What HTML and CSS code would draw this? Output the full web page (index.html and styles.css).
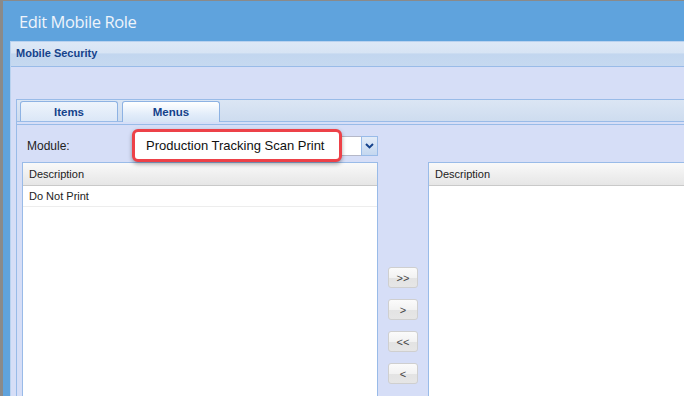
FILE: index.html
```html
<!DOCTYPE html>
<html lang="en">
  <head>
    <meta charset="UTF-8" />
    <meta name="viewport" content="width=device-width, initial-scale=1.0" />
    <title>Edit Mobile Role</title>
    <link rel="stylesheet" href="styles.css">
  </head>
  <body>
    <!-- strip of the page behind the dialog -->
    <div class="backdrop"></div>

    <div class="window">
      <div class="window-title">Edit Mobile Role</div>

      <div class="window-body">
        <div class="panel">
          <div class="panel-header">Mobile Security</div>

          <div class="panel-body">
            <div class="tabpanel">
              <div class="tab-strip">
                <div class="tab">Items</div>
                <div class="tab active">Menus</div>
              </div>
              <div class="tab-spacer"></div>

              <div class="tab-body">
                <div class="module-row">
                  <span class="module-label">Module:</span>
                  <div class="combo">
                    <div class="combo-field"></div>
                    <div class="combo-trigger">
                      <svg width="9" height="6" viewBox="0 0 9 6">
                        <path d="M1 1 L4.5 4.4 L8 1" fill="none" stroke="#15428b" stroke-width="2" />
                      </svg>
                    </div>
                    <!-- highlight callout over the selected value -->
                    <div class="callout">Production Tracking Scan Print</div>
                  </div>
                </div>

                <div class="lists">
                  <div class="grid grid-left">
                    <div class="grid-header">Description</div>
                    <div class="grid-row">Do Not Print</div>
                  </div>

                  <div class="mover">
                    <button class="mover-btn">&gt;&gt;</button>
                    <button class="mover-btn">&gt;</button>
                    <button class="mover-btn">&lt;&lt;</button>
                    <button class="mover-btn">&lt;</button>
                  </div>

                  <div class="grid grid-right">
                    <div class="grid-header">Description</div>
                  </div>
                </div>
              </div>
            </div>
          </div>
        </div>
      </div>
    </div>
  </body>
</html>
```

FILE: styles.css
```css
* {
  margin: 0;
  padding: 0;
  box-sizing: border-box;
}

body,
html {
  height: 100%;
  overflow: hidden;
}

body {
  display: flex;
  background: #8a8a8a;
  font-family: "Liberation Sans", Arial, sans-serif;
  color: #222;
}

.backdrop {
  width: 3px;
  flex-shrink: 0;
}

.window {
  flex: 1;
  margin-top: 1px;
  display: flex;
  flex-direction: column;
  background: #5fa3dd;
  min-width: 0;
}

.window-title {
  height: 40px;
  line-height: 42px;
  padding-left: 16px;
  font-family: "Open Sans", sans-serif;
  font-size: 16.5px;
  letter-spacing: -0.4px;
  color: #eef4fb;
}

.window-body {
  flex: 1;
  display: flex;
  padding-left: 7px;
  overflow: hidden;
}

.panel {
  flex: 1;
  display: flex;
  flex-direction: column;
  border-top: 1px solid #b9d2ef;
  border-left: 1px solid #b9d2ef;
  min-width: 0;
}

.panel-header {
  height: 25px;
  padding: 5px 0 0 5px;
  font-size: 11px;
  font-weight: bold;
  color: #15428b;
  background: linear-gradient(#dde8f6 0%, #d7e4f4 45%, #c2d6ef 50%, #c6d9f0 100%);
  border-bottom: 1px solid #99bbe8;
}

.panel-body {
  flex: 1;
  background: #d6def7;
  padding: 32px 0 0 5px;
  display: flex;
}

.tabpanel {
  flex: 1;
  display: flex;
  flex-direction: column;
  border-top: 1px solid #99bbe8;
  border-left: 1px solid #99bbe8;
}

.tab-strip {
  height: 22px;
  display: flex;
  align-items: flex-end;
  gap: 4px;
  padding-left: 3px;
  background: linear-gradient(#dbe6f4, #cedcef);
  border-bottom: 1px solid #99bbe8;
}

.tab {
  width: 98px;
  height: 20px;
  line-height: 20px;
  text-align: center;
  font-size: 11.5px;
  font-weight: bold;
  color: #15428b;
  background: linear-gradient(#eef4fc, #dbe7f7);
  border: 1px solid #8db2e3;
  border-bottom: none;
  border-radius: 3px 3px 0 0;
}

.tab.active {
  height: 21px;
  margin-bottom: -1px;
  background: linear-gradient(#ffffff, #e3edfa 60%, #d6e4f6);
}

.tab-spacer {
  height: 3px;
  border-bottom: 1px solid #99bbe8;
}

.tab-body {
  flex: 1;
  padding: 11px 0 0 5px;
  display: flex;
  flex-direction: column;
  gap: 6px;
}

.module-row {
  display: flex;
  align-items: center;
  height: 20px;
}

.module-label {
  width: 113px;
  padding-left: 5px;
  font-size: 12px;
  color: #222;
}

.combo {
  position: relative;
  display: flex;
  height: 20px;
}

.combo-field {
  width: 226px;
  height: 20px;
  background: #fff;
  border: 1px solid #b5b8c8;
  border-right: none;
}

.combo-trigger {
  width: 17px;
  height: 20px;
  display: flex;
  align-items: center;
  justify-content: center;
  background: linear-gradient(#e3ecf8, #c4d7ef);
  border: 1px solid #99bbe8;
}

.callout {
  position: absolute;
  left: -3px;
  top: -7px;
  width: 210px;
  height: 33px;
  padding-left: 11px;
  line-height: 27px;
  font-size: 13px;
  color: #111;
  background: #fff;
  border: 3px solid #ed4148;
  border-radius: 6px;
  box-shadow: 0 2px 4px rgba(0, 0, 0, 0.35);
  white-space: nowrap;
}

.lists {
  flex: 1;
  display: flex;
}

.grid {
  background: #fff;
  border: 1px solid #99bbe8;
  border-bottom: none;
}

.grid-left {
  width: 356px;
}

.grid-right {
  flex: 1;
  border-right: none;
}

.grid-header {
  height: 23px;
  line-height: 22px;
  padding-left: 6px;
  font-size: 11px;
  color: #222;
  background: linear-gradient(#f9f9f9, #e6e6e6);
  border-bottom: 1px solid #c9c9c9;
}

.grid-row {
  height: 21px;
  line-height: 20px;
  padding-left: 6px;
  font-size: 11px;
  color: #222;
  border-bottom: 1px solid #ededed;
}

.mover {
  width: 50px;
  display: flex;
  flex-direction: column;
  align-items: center;
  gap: 11px;
  padding-top: 105px;
}

.mover-btn {
  width: 30px;
  height: 21px;
  font-family: "Liberation Sans", Arial, sans-serif;
  font-size: 11px;
  color: #444;
  background: linear-gradient(#fbfbfb 0%, #f2f2f2 50%, #e3e3e3 51%, #e6e6e6 100%);
  border: 1px solid #cfcfcf;
  border-radius: 3px;
}
```
